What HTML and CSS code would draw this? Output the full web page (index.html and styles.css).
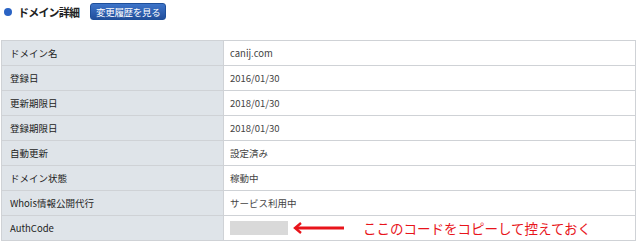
FILE: index.html
```html
<!DOCTYPE html>
<html lang="ja">
<head>
<meta charset="utf-8">
<title>ドメイン詳細</title>
<link rel="stylesheet" href="styles.css">
</head>
<body>
<div class="head">
  <span class="dot"></span>
  <h2 class="title">ドメイン詳細</h2>
  <button class="btn">変更履歴を見る</button>
</div>
<table class="detail">
  <tr><th>ドメイン名</th><td>canij.com</td></tr>
  <tr><th>登録日</th><td>2016/01/30</td></tr>
  <tr><th>更新期限日</th><td>2018/01/30</td></tr>
  <tr><th>登録期限日</th><td>2018/01/30</td></tr>
  <tr><th>自動更新</th><td>設定済み</td></tr>
  <tr><th>ドメイン状態</th><td>稼動中</td></tr>
  <tr><th>Whois情報公開代行</th><td>サービス利用中</td></tr>
  <tr><th>AuthCode</th><td>
    <div class="auth">
      <span class="mask"></span>
      <svg class="arrow" width="52" height="14" viewBox="0 0 52 14">
        <path d="M8 2 L2 7 L8 12" fill="none" stroke="#e8141b" stroke-width="2.4"/>
        <path d="M3 7 H51" stroke="#e8141b" stroke-width="3"/>
      </svg>
      <span class="note">ここのコードをコピーして控えておく</span>
    </div>
  </td></tr>
</table>
</body>
</html>
```

FILE: styles.css
```css
body {
  margin: 0;
  padding: 3px 0 0 1px;
  font-family: "Noto Sans CJK JP", "Noto Sans", sans-serif;
  color: #333;
  background: #fff;
}
.head {
  display: flex;
  align-items: center;
  height: 17px;
  padding-left: 3px;
}
.dot {
  width: 8px;
  height: 8px;
  border-radius: 50%;
  background: #2a63c4;
  margin-right: 6px;
}
.title {
  margin: 0;
  font-size: 11px;
  font-weight: 700;
  color: #222;
  letter-spacing: -0.8px;
  white-space: nowrap;
}
.btn {
  margin-left: 11px;
  width: 76px;
  height: 17px;
  padding: 0;
  border: 1px solid #1e4f9a;
  border-radius: 3px;
  background: linear-gradient(#3d74c9, #224f9c);
  color: #fff;
  font-family: inherit;
  font-size: 9.5px;
  line-height: 14px;
  letter-spacing: -0.3px;
  white-space: nowrap;
}
.detail {
  margin-top: 20px;
  width: 635px;
  border-collapse: collapse;
  font-size: 9.5px;
}
.detail th,
.detail td {
  height: 24px;
  padding: 0 8px;
  border: 1px solid #cfd2d6;
  text-align: left;
  font-weight: normal;
  vertical-align: middle;
  white-space: nowrap;
}
.detail th {
  width: 205px;
  background: #dfe4e9;
  color: #222;
}
.detail td {
  padding-left: 6px;
  background: #fff;
  color: #444;
}
.auth {
  display: flex;
  align-items: center;
  height: 24px;
}
.mask {
  width: 58px;
  height: 14px;
  background: #d9d9d9;
}
.arrow {
  margin-left: 5px;
}
.note {
  margin-left: 18px;
  font-size: 13.5px;
  line-height: 16px;
  color: #e8141b;
  white-space: nowrap;
}
```
